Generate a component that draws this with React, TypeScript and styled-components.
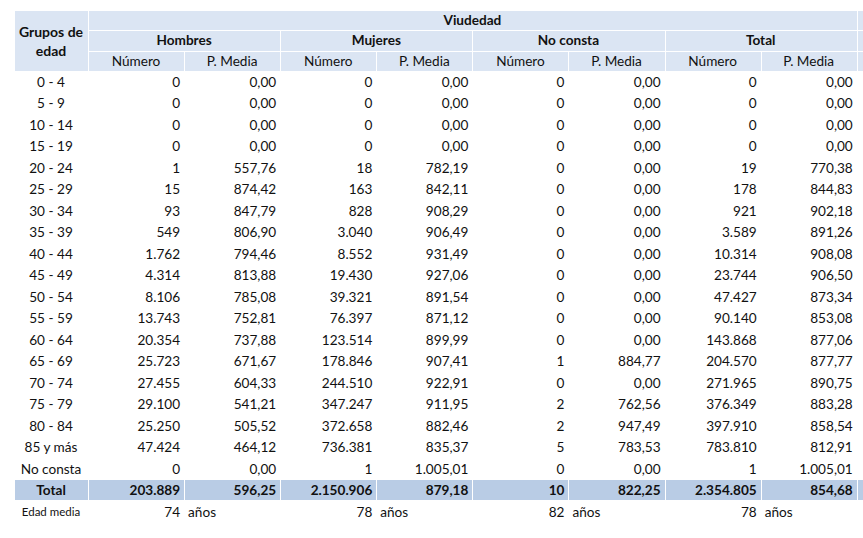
import React from 'react';
import styled, { createGlobalStyle } from 'styled-components';

const GlobalStyle = createGlobalStyle`
  html, body {
    margin: 0;
    padding: 0;
    background: #ffffff;
    overflow: hidden;
  }
  body {
    font-family: Lato, "Open Sans", sans-serif;
    color: #111111;
  }
`;

const Page = styled.div`
  box-sizing: border-box;
  width: 863px;
  padding: 10px 0 0 14px;
  overflow: hidden;
`;

const Table = styled.table`
  border-collapse: collapse;
  table-layout: fixed;
  width: 939px;
  font-size: 13.6px;
`;

const Cell = styled.td<{ $bg?: 'head' | 'total'; $align?: 'left' | 'center' | 'right'; $bold?: boolean }>`
  border: 1px solid #ffffff;
  padding: 0 4px 0 3px;
  height: 20px;
  line-height: 20px;
  white-space: nowrap;
  overflow: hidden;
  text-align: ${p => p.$align ?? 'right'};
  font-weight: ${p => (p.$bold ? 700 : 400)};
  background: ${p => (p.$bg === 'head' ? '#dbe5f3' : p.$bg === 'total' ? '#b9cce5' : 'transparent')};
`;

const HeadCell = styled(Cell)`
  height: 19.3px;
  line-height: 19.3px;
`;

const DataCell = styled(Cell)`
  height: 20.5px;
  line-height: 20.5px;
`;

const AgeCell = styled(DataCell)`
  text-align: center;
`;

const NoteCell = styled(Cell)`
  height: 22px;
  line-height: 22px;
`;

const NoteLabel = styled(NoteCell)`
  font-size: 11.5px;
  text-align: center;
`;

const GroupHead = styled(Cell)`
  line-height: 19px;
  font-size: 14px;
`;

type Row = [string, string, string, string, string, string, string, string, string];

const rows: Row[] = [
  ['0 - 4', '0', '0,00', '0', '0,00', '0', '0,00', '0', '0,00'],
  ['5 - 9', '0', '0,00', '0', '0,00', '0', '0,00', '0', '0,00'],
  ['10 - 14', '0', '0,00', '0', '0,00', '0', '0,00', '0', '0,00'],
  ['15 - 19', '0', '0,00', '0', '0,00', '0', '0,00', '0', '0,00'],
  ['20 - 24', '1', '557,76', '18', '782,19', '0', '0,00', '19', '770,38'],
  ['25 - 29', '15', '874,42', '163', '842,11', '0', '0,00', '178', '844,83'],
  ['30 - 34', '93', '847,79', '828', '908,29', '0', '0,00', '921', '902,18'],
  ['35 - 39', '549', '806,90', '3.040', '906,49', '0', '0,00', '3.589', '891,26'],
  ['40 - 44', '1.762', '794,46', '8.552', '931,49', '0', '0,00', '10.314', '908,08'],
  ['45 - 49', '4.314', '813,88', '19.430', '927,06', '0', '0,00', '23.744', '906,50'],
  ['50 - 54', '8.106', '785,08', '39.321', '891,54', '0', '0,00', '47.427', '873,34'],
  ['55 - 59', '13.743', '752,81', '76.397', '871,12', '0', '0,00', '90.140', '853,08'],
  ['60 - 64', '20.354', '737,88', '123.514', '899,99', '0', '0,00', '143.868', '877,06'],
  ['65 - 69', '25.723', '671,67', '178.846', '907,41', '1', '884,77', '204.570', '877,77'],
  ['70 - 74', '27.455', '604,33', '244.510', '922,91', '0', '0,00', '271.965', '890,75'],
  ['75 - 79', '29.100', '541,21', '347.247', '911,95', '2', '762,56', '376.349', '883,28'],
  ['80 - 84', '25.250', '505,52', '372.658', '882,46', '2', '947,49', '397.910', '858,54'],
  ['85 y más', '47.424', '464,12', '736.381', '835,37', '5', '783,53', '783.810', '812,91'],
  ['No consta', '0', '0,00', '1', '1.005,01', '0', '0,00', '1', '1.005,01'],
];

const totals = ['203.889', '596,25', '2.150.906', '879,18', '10', '822,25', '2.354.805', '854,68'];
const groups = ['Hombres', 'Mujeres', 'No consta', 'Total'];
const ages = ['74', '78', '82', '78'];

export default function App() {
  return (
    <>
      <GlobalStyle />
      <Page>
        <Table>
          <colgroup>
            <col style={{ width: 74 }} />
            {Array.from({ length: 9 }).map((_, i) => (
              <col key={i} style={{ width: 96.1 }} />
            ))}
          </colgroup>
          <thead>
            <tr>
              <GroupHead as="th" rowSpan={3} $bg="head" $align="center" $bold>
                Grupos de
                <br />
                edad
              </GroupHead>
              <HeadCell as="th" colSpan={8} $bg="head" $align="center" $bold>
                Viudedad
              </HeadCell>
              <HeadCell as="th" $bg="head" />
            </tr>
            <tr>
              {groups.map(g => (
                <HeadCell as="th" key={g} colSpan={2} $bg="head" $align="center" $bold>
                  {g}
                </HeadCell>
              ))}
              <HeadCell as="th" $bg="head" />
            </tr>
            <tr>
              {groups.map(g => (
                <React.Fragment key={g}>
                  <HeadCell as="th" $bg="head" $align="center">Número</HeadCell>
                  <HeadCell as="th" $bg="head" $align="center">P. Media</HeadCell>
                </React.Fragment>
              ))}
              <HeadCell as="th" $bg="head" />
            </tr>
          </thead>
          <tbody>
            {rows.map(r => (
              <tr key={r[0]}>
                <AgeCell>{r[0]}</AgeCell>
                {r.slice(1).map((v, i) => (
                  <DataCell key={i}>{v}</DataCell>
                ))}
                <DataCell />
              </tr>
            ))}
            <tr>
              <Cell $bg="total" $align="center" $bold>Total</Cell>
              {totals.map((v, i) => (
                <Cell key={i} $bg="total" $bold>{v}</Cell>
              ))}
              <Cell $bg="total" />
            </tr>
            <tr>
              <NoteLabel>Edad media</NoteLabel>
              {ages.map((a, i) => (
                <React.Fragment key={i}>
                  <NoteCell>{a}</NoteCell>
                  <NoteCell $align="left">años</NoteCell>
                </React.Fragment>
              ))}
              <NoteCell />
            </tr>
          </tbody>
        </Table>
      </Page>
    </>
  );
}
